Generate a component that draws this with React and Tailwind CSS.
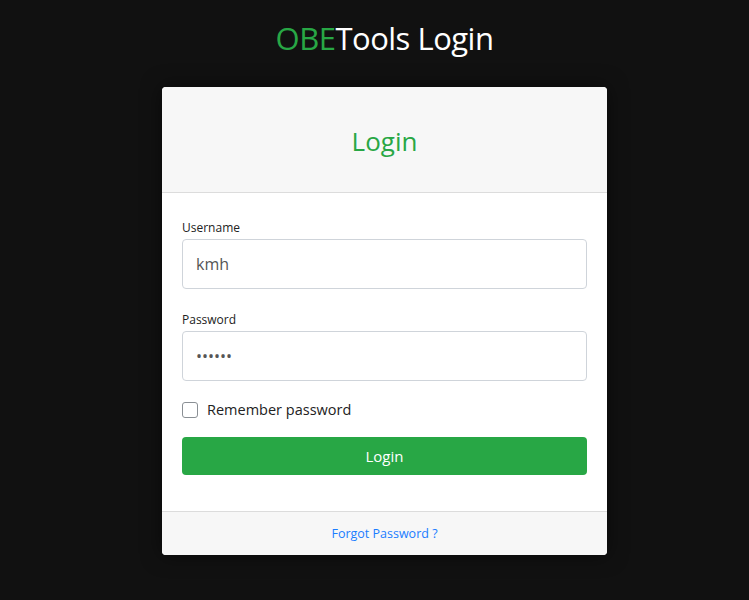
import React, { useState } from "react";

function App() {
  const [user, setUser] = useState("kmh");
  const [pass, setPass] = useState("123456");
  const [remember, setRemember] = useState(false);

  return (
    <div
      className="min-h-screen bg-[#111111] flex flex-col items-center pl-[20px]"
      style={{ fontFamily: '"Open Sans", "Noto Sans", sans-serif' }}
    >
      <h1 className="mt-[16px] text-[31px] leading-[44px] text-white tracking-[-0.5px]">
        <span className="text-[#28a745]">OBE</span>Tools Login
      </h1>

      {/* Card */}
      <div className="mt-[27px] w-[445px] bg-white rounded-[4px] overflow-hidden shadow-[0_0_20px_rgba(0,0,0,0.5)]">
        <div className="h-[106px] bg-[#f7f7f7] border-b border-[#dcdcdc] flex items-center justify-center">
          <h2 className="text-[26px] text-[#28a745] pt-[3px]">Login</h2>
        </div>

        <div className="px-[20px] pt-[27px] pb-[36px]">
          <label className="block text-[12px] leading-[16px] text-[#222]">Username</label>
          <input
            value={user}
            onChange={e => setUser(e.target.value)}
            className="mt-[3px] w-full h-[50px] border border-[#cfd4da] rounded-[4px] px-[13px] text-[16px] text-[#555] outline-none"
          />

          <label className="block mt-[23px] text-[12px] leading-[16px] text-[#222]">Password</label>
          <input
            type="password"
            value={pass}
            onChange={e => setPass(e.target.value)}
            className="mt-[3px] w-full h-[50px] border border-[#cfd4da] rounded-[4px] px-[13px] text-[16px] text-[#555] outline-none"
          />

          <label className="mt-[18px] flex items-center gap-[9px] cursor-pointer">
            <input
              type="checkbox"
              checked={remember}
              onChange={e => setRemember(e.target.checked)}
              className="appearance-none w-[16px] h-[16px] border border-[#8a8f94] rounded-[3px] bg-white checked:bg-[#28a745]"
            />
            <span className="text-[14.5px] text-[#222]">Remember password</span>
          </label>

          <button className="mt-[16px] w-full h-[38px] bg-[#28a745] rounded-[4px] text-white text-[15px]">
            Login
          </button>
        </div>

        <div className="h-[44px] bg-[#f7f7f7] border-t border-[#dcdcdc] flex items-center justify-center pt-[3px]">
          <a href="#" className="text-[12.5px] text-[#1a7dff]">Forgot Password ?</a>
        </div>
      </div>
    </div>
  );
}

export default App;
